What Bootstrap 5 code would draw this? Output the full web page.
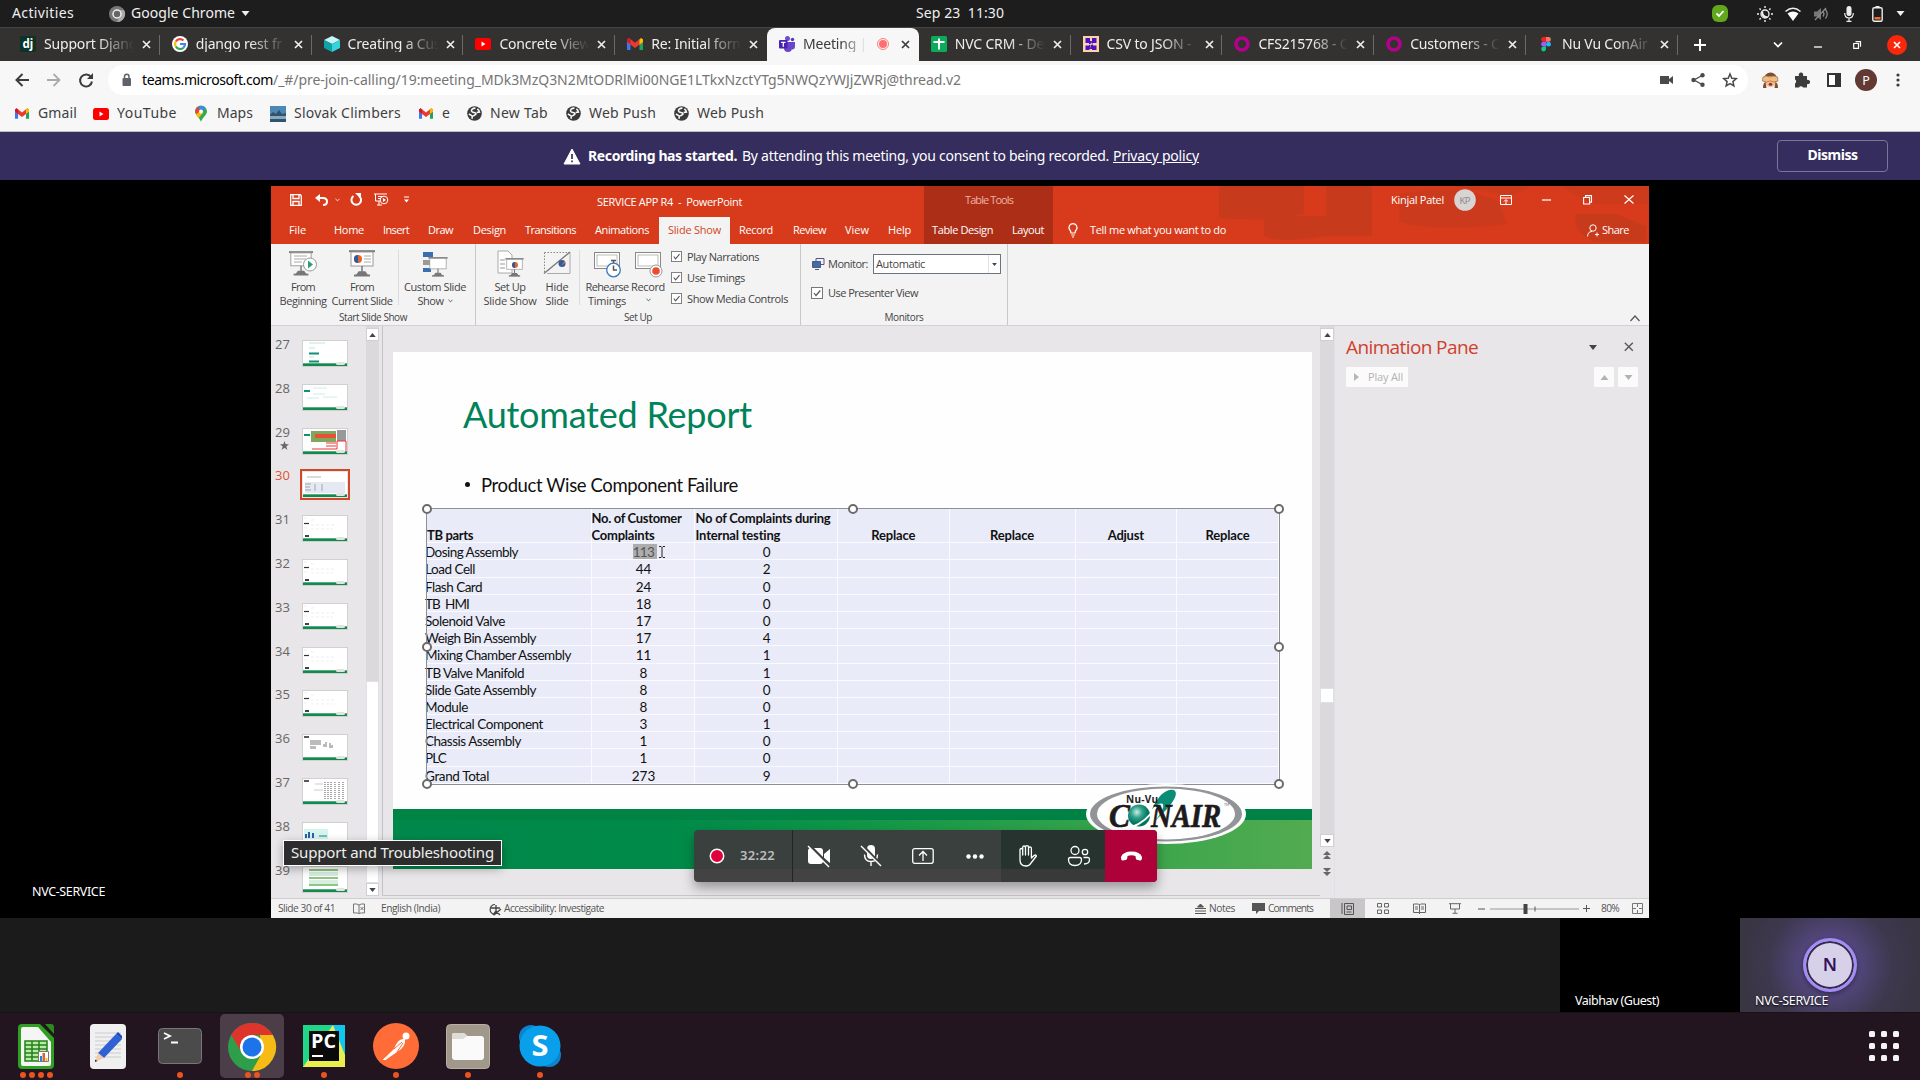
<!DOCTYPE html>
<html lang="en">
<head>
<meta charset="utf-8">
<title>Meeting | Microsoft Teams</title>
<link href="https://cdn.jsdelivr.net/npm/bootstrap@5.3.0/dist/css/bootstrap.min.css" rel="stylesheet">
<style>
body{width:1920px;height:1080px;overflow:hidden;background:#000;font-family:"Noto Sans","Open Sans",sans-serif;font-size:14px;line-height:1.2}
svg{flex:none;display:block;overflow:visible}
.bar{display:flex;align-items:center;flex:none}
.bar>*,.fixed{flex:none}
[data-w]{display:inline-block;white-space:pre;flex:none}
.end{margin-left:auto}
/* desktop top bar */
.sysbar{height:27px;background:#1d1d1d;color:#f0f0f0;position:relative}
.sysclock{width:100%;text-align:center;left:0}
.tabstrip{height:34px;background:#333230;padding-left:8px;border-top:1px solid #454442;color:#eee}
.ctab{width:151.8px;height:33px;display:flex;align-items:center;padding:0 0 1px 12px;position:relative}
.ctab .ttl{width:90px;margin-left:8px;overflow:hidden;white-space:nowrap;-webkit-mask-image:linear-gradient(90deg,#000 60%,transparent 100%);letter-spacing:-.18px}
.ctab .cls{width:9px;margin-left:8px}
.ctab.line::after{content:"";position:absolute;right:0;top:7px;width:1px;height:20px;background:#6b6a68}
.ctab.on{background:#f7f7f7;color:#3c3c3c;border-radius:8px 8px 0 0}
.ctab.on .ttl{width:64px}
.toolbar1{height:37px;background:#f7f7f7;color:#333;padding-left:13px}
.omni{width:1640px;height:30px;border-radius:15px;background:#fff;margin-left:13px;padding-left:12px}
.omni span{padding-top:1px}
.omni .dim{color:#757575}
.marks{height:34px;background:#f7f7f7;border-bottom:1px solid #bcbcbc;color:#3f3f3f;padding:0 0 2px 13px}
.consent{height:48px;background:#342d5e;color:#fff;padding-left:564px}
.consent .dismiss{width:111px;height:32px;border:1px solid #7b7699;border-radius:4px;color:#fff;font-weight:700;font-size:14px;line-height:28px;padding:0 0 2px;margin-left:578px;background:transparent}
.stage{height:738px;background:#000;padding:6px 0 0 271px;position:relative}
.stagename{left:32px;top:704px;color:#fff;font-size:12.5px}
/* presentation window */
.ppt{width:1378px;height:732px;background:#e8e6e9;font-family:"Open Sans","Noto Sans",sans-serif;font-size:11px;color:#444;position:relative}
.redhead{height:58px;background:#d83b1b;color:#fff;position:relative}
.redhead .deco{left:0;top:0}
.redhead .bar{position:relative}
.tools{left:653px;top:0;width:129px;height:58px;background:#ac2e16}
.t1{height:31px;padding-bottom:4px}
.t2{height:27px;padding-bottom:1px}
.actv{width:71px;height:27px;background:#f4f3f4;color:#d24726;display:flex;align-items:center;justify-content:center}
.ribbon{height:82px;background:#f4f3f4;border-bottom:1px solid #d3d1d3;position:relative}
.grp{height:100%;display:flex;flex-direction:column;border-right:1px solid #c9c9c9;background-clip:content-box}
.grp .inner{height:67px;display:flex}
.grp .cap{text-align:center;font-size:10px;line-height:15px;color:#444}
.tool{display:flex;flex-direction:column;align-items:center;padding-top:6px;line-height:14px}
.tool svg{margin-bottom:2px}
.vsep{width:1px;height:55px;background:#dcdcdc;margin-top:6px}
.chk{display:flex;align-items:center;height:21px}
.work{height:573px;display:flex;border-bottom:1px solid #cfcdcf}
.thumbs{width:95px;height:570px;overflow:hidden;padding-top:15px}
.th{height:43.8px;display:flex}
.th .no{width:32px;padding-left:4px;font-size:13px;line-height:13px;color:#666;margin-top:-3px}
.th .pic{width:44px;height:25px;background:#fff;outline:1px solid #d0d0d0;position:relative}
.th .pic.sel{outline:2.5px solid #d24726;outline-offset:1.2px}
.sb{width:13px;display:flex;flex-direction:column;background:#dbd9dc}
.sb .btnx{height:13px;background:#fff;border:1px solid #d0d0d0;display:flex;align-items:center;justify-content:center}
.canvas{width:938px;height:570px;border-left:1px solid #c4c2c4;margin-left:3px;padding:26px 0 0 10px;border-bottom:1px solid #c8c6c8}
.slide{width:919px;height:517px;background:#fefefe;position:relative;font-family:Lato,"Open Sans",sans-serif;color:#111;display:flex;flex-direction:column}
.slide h1{font-size:36px;line-height:42px;color:#00835a;margin:41px 0 0 70px;font-weight:400}
.bul{font-size:18.5px;line-height:24px;margin:38px 0 0 70px;display:flex}
.dotc{width:5px;height:5px;border-radius:50%;background:#111;margin:9px 11px 0 2px}
.gridt{margin:12px 0 0 34px;width:852px;height:275px;display:grid;grid-template-columns:164.5px 103px 143.5px 111.5px 126px 101.5px 102px;grid-template-rows:34.2px repeat(14,17.2px);background:#e9ecf8;outline:1.3px solid #8d8f96;position:relative;font-size:13.5px;line-height:17px;flex:none}
.gridt .cel{border-right:1px solid #fafbff;border-bottom:1px solid #fafbff;text-align:center;white-space:nowrap;padding-top:1px;height:100%;min-height:0}
.gridt .cel:not(.nm):not(.hd){padding-left:2px}
.gridt .nm{text-align:left;text-indent:-1px}
.gridt .hd{font-weight:700;font-size:13px;line-height:16.5px;display:flex;align-items:flex-end;justify-content:center;padding-bottom:0}
.gridt .hl{justify-content:flex-start;text-align:left}
.gridt .hd>span{position:relative;top:1px}
.gridt .pk{background:#ecedf8}
.sel113{background:#adadb0;color:#555;display:inline-block;height:15px;line-height:16px;padding-right:3px;margin-left:3px;letter-spacing:-.6px;vertical-align:top}
.hdl{position:absolute;width:10px;height:10px;border:2px solid #6b6b6b;border-radius:50%;background:#fff;transform:translate(-50%,-50%)}
.foot{margin-top:auto;height:60px;background:linear-gradient(90deg,#00884a 0,#008a49 30%,#129748 52%,#3aa54c 80%,#52ab50 100%)}
.foot::before{content:"";display:block;height:11px;background:linear-gradient(90deg,#008443,#008145)}
.pane{flex:1;padding:10px 11px 0 11px}
.pane h2{font-size:19px;line-height:22px;color:#d0402c;margin:0;font-weight:400}
.wbtn{background:#fbfbfb;height:20px;display:flex;align-items:center;color:#b3b1b3}
.status{height:19px;background:#f4f3f4;font-size:10.2px;color:#555;padding-left:7px}
.callbar{left:694px;top:650px;width:463px;height:52px;border-radius:4px;overflow:hidden;background:linear-gradient(#3a403e 0 39px,#434343 39px);box-shadow:0 6px 12px rgba(0,0,0,.35);display:flex;align-items:center;z-index:5}
.cb{width:52px;height:52px;display:flex;align-items:center;justify-content:center}
.cb.dk{background:linear-gradient(#27332e 0 39px,#383a39 39px)}
.tip{left:283px;top:660px;width:219px;height:26px;border:1px solid #fff;background:#2d2d2d;color:#eee;font-size:15px;display:flex;align-items:center;padding:0 0 2px 7px;z-index:6;box-shadow:0 3px 10px rgba(0,0,0,.3)}
.strip{height:94px;background:#1b1b1b;display:flex;justify-content:flex-end;color:#fff;font-size:12.5px}
.tile{width:180px;height:94px;padding-left:15px;display:flex;flex-direction:column;justify-content:flex-end;padding-bottom:0;text-shadow:0 1px 2px #000}
.tile.me{background:radial-gradient(circle at 50% 50%,#5e4f8a 0,#51467a 30px,#3e384e 62px,#393543 90px);position:relative}
.ava{left:63px;top:20px;width:54px;height:54px;border:3px solid #a48cf8;border-radius:50%;background:#d6d0e8;box-shadow:inset 0 0 0 2px #322a4a,0 2px 5px rgba(0,0,0,.4);color:#33135c;font-size:18px;font-weight:600;text-shadow:none;display:flex;align-items:center;justify-content:center}
.dock{height:68px;background:#221520;border-top:1px solid #141414;display:flex;position:relative}
.app{width:72px;height:67px;display:flex;flex-direction:column;align-items:center;justify-content:flex-end;position:relative}
.app.cur::before{content:"";position:absolute;left:4px;top:1px;width:64px;height:64px;border-radius:5px;background:#4b3e49}
.app svg{position:relative}
.dots{height:6px;display:flex;gap:3px;position:relative;margin:1px 0 2px}
.dots i{width:6px;height:6px;border-radius:50%;background:#e95420}
.nine{display:grid;grid-template-columns:repeat(3,6px);gap:6px;margin:18px 21px 0 auto;height:30px}
.nine i{width:6px;height:6px;background:#f4f4f4;border-radius:1.5px}
</style>
<script src="https://cdn.jsdelivr.net/npm/bootstrap@5.3.0/dist/js/bootstrap.bundle.min.js"></script>
</head>
<body>
<svg width="0" height="0" class="position-absolute">
<defs>
<symbol id="x" viewBox="0 0 9 9"><path d="M1 1l7 7M8 1l-7 7" stroke="currentColor" stroke-width="1.7" fill="none"/></symbol>
<symbol id="gm" viewBox="0 0 16 12"><path d="M0 12V1.500h3.500V12z" fill="#3b78f0"/><path d="M12.500 1.500H16V12h-3.500z" fill="#20a558"/><path d="M0 1.500 2 0l6 4.800L14 0l2 1.500V4L8 10 0 4z" fill="#ea3a30"/><path d="M12.500 1.500 14.200 0 16 1.600V4l-3.500 2.700z" fill="#fbbc05"/><path d="M0 3.500v-2L1.800 0 3.500 1.300v5z" fill="#d01a2b"/></symbol>
<symbol id="yt" viewBox="0 0 16 12"><rect width="16" height="12" rx="2.5" fill="#f00"/><path d="M6.500 3.500v5l4-2.500z" fill="#fff"/></symbol>
<symbol id="globe" viewBox="0 0 16 16"><circle cx="8" cy="8" r="7.800" fill="#3a3a3d"/><path d="M9 2.300c-3 0-5 1.500-4 3.500 1 1.700 4 .4 4.500 2.200.5 1.900-2.500 1.200-2.800 3.200M11 3c1.500 1 2 2 2.300 3.500l-3 .5M2 8.500l3.500 2v3" fill="none" stroke="#f7f7f7" stroke-width="1.700"/></symbol>
<symbol id="ring" viewBox="0 0 16 16"><circle cx="8" cy="8" r="6" fill="none" stroke="#b5008c" stroke-width="3.600"/></symbol>
<symbol id="ck" viewBox="0 0 12 12"><rect x=".5" y=".5" width="11" height="11" fill="#fff" stroke="#777"/><path d="M3 6l2 2.500L9.300 3.500" fill="none" stroke="#555" stroke-width="1.200"/></symbol>
<symbol id="up" viewBox="0 0 8 5"><path d="M0 5l4-5 4 5z" fill="currentColor"/></symbol>
<symbol id="dn" viewBox="0 0 8 5"><path d="M0 0l4 5 4-5z" fill="currentColor"/></symbol>
<symbol id="cv" viewBox="0 0 6 4"><path d="M.5.5L3 3 5.500.5" fill="none" stroke="currentColor"/></symbol>
<symbol id="board" viewBox="0 0 26 27"><path d="M0 1.200h26" stroke="#777" stroke-width="2"/><rect x="2" y="2" width="22" height="14" fill="#fff" stroke="#999"/><path d="M13 16v6M8 25l2-3h6l2 3z" stroke="#777" stroke-width="1.500" fill="#777"/><path d="M5 25.500h16" stroke="#777" stroke-width="2"/></symbol>
</defs>
</svg>

<div class="sysbar bar">
  <span data-gap="12" data-w="62">Activities</span>
  <svg data-gap="35" width="16" height="16" viewBox="0 0 16 16"><circle cx="8" cy="8" r="8" fill="#777"/><path d="M8 4h7A8 8 0 0 1 8 16l3-6z" fill="#aaa"/><circle cx="8" cy="8" r="4" fill="#666" stroke="#eee" stroke-width="1.500"/></svg>
  <span data-gap="6" data-w="104">Google Chrome</span>
  <svg data-gap="6" width="9" height="5"><use href="#dn"/></svg>
  <div class="sysclock position-absolute"><span data-w="88">Sep 23  11:30</span></div>
  <svg class="end" width="16" height="17" viewBox="0 0 16 17"><rect width="16" height="17" rx="6" fill="#62a81c"/><path d="M4.500 8.500l2.500 2.500 4.500-5" fill="none" stroke="#fff" stroke-width="1.800"/></svg>
  <svg data-gap="29" width="16" height="16" viewBox="0 0 16 16"><circle cx="8" cy="8" r="4" fill="none" stroke="#eee" stroke-width="1.300"/><path d="M5.500 5.500a4 4 0 0 0 5 5.500c-3 0-5-2-5-5.500zM8 0v2M8 14v2M0 8h2M14 8h2M2.500 2.500l1.300 1.300M12.200 12.200l1.300 1.300M2.500 13.500l1.300-1.300M12.200 3.800l1.300-1.300" stroke="#eee" stroke-width="1.400" fill="#eee"/></svg>
  <svg data-gap="12" width="16" height="14" viewBox="0 0 16 14"><path d="M8 14L2.500 6.500q5.500-4 11 0z" fill="#fff"/><path d="M.5 4.500q7.500-6.500 15 0" fill="none" stroke="#eee" stroke-width="1.600"/></svg>
  <svg data-gap="13" width="15" height="14" viewBox="0 0 15 14"><path d="M0 4.500h3L7 1v12L3 9.500H0z" fill="#777"/><path d="M9 4.500q2 2.500 0 5M11.500 2.500q3.500 4.500 0 9M1 13L12 1" fill="none" stroke="#888" stroke-width="1.300"/></svg>
  <svg data-gap="15" width="10" height="16" viewBox="0 0 10 16"><rect x="2.500" width="5" height="10" rx="2.500" fill="#eee"/><path d="M.7 7q0 5 4.300 5t4.300-5M5 12v3M2.500 15.300h5" fill="none" stroke="#eee" stroke-width="1.200"/></svg>
  <svg data-gap="18" width="11" height="16" viewBox="0 0 11 16"><path d="M3.500 0h4v1.500h-4z" fill="#eee"/><rect x=".8" y="1.800" width="9.400" height="13.400" rx="1.500" fill="none" stroke="#eee" stroke-width="1.400"/><path d="M2.500 11h6v2.500h-6z" fill="#f26c2c"/></svg>
  <svg data-gap="13" data-right="15" width="9" height="5"><use href="#dn"/></svg>
</div>

<div class="tabstrip bar">
  <div class="ctab line"><svg width="16" height="16"><rect width="16" height="16" fill="#0b3426"/><text x="2.500" y="12" font-size="11.500" font-weight="700" fill="#fff">dj</text></svg><span class="ttl">Support Djang</span><svg class="cls" height="9"><use href="#x"/></svg></div>
  <div class="ctab line"><svg width="16" height="16" viewBox="0 0 16 16"><circle cx="8" cy="8" r="8" fill="#fff"/><g fill="none" stroke-width="2.200"><path d="M3.800 5.500A5 5 0 0 1 11.500 4.500" stroke="#ea4335"/><path d="M3.700 5.500a5 5 0 0 0 0 5" stroke="#fbbc05"/><path d="M3.800 10.500a5 5 0 0 0 7.700 1.200" stroke="#34a853"/><path d="M8 8h5a5 5 0 0 1-1.600 3.700" stroke="#4285f4"/></g></svg><span class="ttl">django rest fr</span><svg class="cls" height="9"><use href="#x"/></svg></div>
  <div class="ctab line"><svg width="16" height="16" viewBox="0 0 16 16"><path d="M8 0l8 4-8 4-8-4z" fill="#c6f5f5"/><path d="M0 4l8 4v8l-8-4z" fill="#0fa3a8"/><path d="M16 4L8 8v8l8-4z" fill="#35d4dc"/></svg><span class="ttl">Creating a Cus</span><svg class="cls" height="9"><use href="#x"/></svg></div>
  <div class="ctab line"><svg width="16" height="12"><use href="#yt"/></svg><span class="ttl">Concrete View</span><svg class="cls" height="9"><use href="#x"/></svg></div>
  <div class="ctab"><svg width="16" height="12"><use href="#gm"/></svg><span class="ttl">Re: Initial form</span><svg class="cls" height="9"><use href="#x"/></svg></div>
  <div class="ctab on"><svg width="16" height="16" viewBox="0 0 16 16"><circle cx="8.500" cy="2.500" r="2.500" fill="#6b4fd0"/><circle cx="13.500" cy="3.500" r="1.700" fill="#4c3ab8"/><path d="M5 6h8v6a4 4 0 0 1-8 0zM12 6h4v4.500a3 3 0 0 1-3 3z" fill="#6a45cc"/><rect y="4" width="8.500" height="8.500" rx="1" fill="#4b22b4"/><path d="M2 6.300h4.500M4.300 6.300v4.500" stroke="#fff" stroke-width="1.300"/></svg><span class="ttl">Meeting | M</span><svg data-gap="10" width="12" height="12"><circle cx="6" cy="6" r="5.500" fill="none" stroke="#ff7c80"/><circle cx="6" cy="6" r="4" fill="#ff6e73"/></svg><svg data-gap="12" width="9" height="9"><use href="#x"/></svg></div>
  <div class="ctab line"><svg width="16" height="16"><rect width="16" height="16" rx="1.500" fill="#0caa5b"/><path d="M8 2.500v11M2.500 6h11" stroke="#fff" stroke-width="2"/></svg><span class="ttl">NVC CRM - Det</span><svg class="cls" height="9"><use href="#x"/></svg></div>
  <div class="ctab line"><svg width="16" height="16"><rect width="16" height="16" fill="#ffd3a5"/><path d="M2.500 2h4.500v5H2.500zM9 2h4.500v5H9zM2.500 9.500h4v4.500h-4zM9 9.500h4.500v4.500H9zM6 5h4v8H6z" fill="#4a12c8"/><path d="M9 4.500L8.500 7.500h4L8 9l-1 4 .3-4H4.500L8 7.500z" fill="#ffd3a5"/></svg><span class="ttl">CSV to JSON -</span><svg class="cls" height="9"><use href="#x"/></svg></div>
  <div class="ctab line"><svg width="16" height="16"><use href="#ring"/></svg><span class="ttl">CFS215768 - C</span><svg class="cls" height="9"><use href="#x"/></svg></div>
  <div class="ctab line"><svg width="16" height="16"><use href="#ring"/></svg><span class="ttl">Customers - C</span><svg class="cls" height="9"><use href="#x"/></svg></div>
  <div class="ctab line"><svg width="16" height="16" viewBox="0 0 16 16"><path d="M8 1H5.500a2.400 2.400 0 0 0 0 4.800H8z" fill="#f5201a"/><path d="M8 1h2.500a2.400 2.400 0 0 1 0 4.800H8z" fill="#ff7262"/><path d="M8 5.800H5.500a2.400 2.400 0 0 0 0 4.800H8z" fill="#a259ff"/><circle cx="10.500" cy="8.200" r="2.400" fill="#1abcfe"/><path d="M8 10.600H5.500A2.400 2.400 0 1 0 8 13z" fill="#0acf83"/></svg><span class="ttl">Nu Vu ConAir</span><svg class="cls" height="9"><use href="#x"/></svg></div>
  <svg data-gap="16" width="12" height="12"><path d="M6 0v12M0 6h12" stroke="#fff" stroke-width="2"/></svg>
  <svg data-gap="67" width="10" height="6"><path d="M1 .5l4 4 4-4" fill="none" stroke="#fff" stroke-width="1.700"/></svg>
  <svg data-gap="31" width="8" height="8"><path d="M0 6h8" stroke="#fff" stroke-width="1.300"/></svg>
  <svg data-gap="31" width="8" height="8"><path d="M.7 2.500h4.800v4.800H.7zM2.500.7h5v5" fill="none" stroke="#fff" stroke-width="1.200"/></svg>
  <svg data-gap="26" width="20" height="20"><circle cx="10" cy="10" r="10" fill="#f9280c"/><path d="M7 7l6 6M13 7l-6 6" stroke="#fff" stroke-width="1.600"/></svg>
</div>

<div class="toolbar1 bar">
  <svg data-gap="2" width="14" height="14"><path d="M14 7H2M7.500 1L1.500 7l6 6" fill="none" stroke="#3c3c3c" stroke-width="2"/></svg>
  <svg data-gap="18" width="14" height="14"><path d="M0 7h12M6.500 1l6 6-6 6" fill="none" stroke="#aaa" stroke-width="1.800"/></svg>
  <svg data-gap="18" width="14" height="14"><path d="M12 4a6 6 0 1 0 1 4.500" fill="none" stroke="#3c3c3c" stroke-width="2"/><path d="M14 0v6H8z" fill="#3c3c3c"/></svg>
  <div class="omni bar" data-gap="15">
    <svg width="12" height="14" data-gap="1"><rect x="1.500" y="5" width="8.500" height="8" rx="1" fill="#5f6368"/><path d="M3.500 5V3.500a2.200 2.200 0 0 1 4.500 0V5" fill="none" stroke="#5f6368" stroke-width="1.500"/></svg>
    <span data-gap="9" data-w="131" class="text-black">teams.microsoft.com</span><span class="dim" data-w="688">/_#/pre-join-calling/19:meeting_MDk3MzQ3N2MtODRlMi00NGE1LTkxNzctYTg5NWQzYWJjZWRj@thread.v2</span>
    <svg data-gap="699" width="13" height="10"><path d="M0 1h9v8H0zM9 4l4-3v8L9 6z" fill="#4a4a4a"/></svg>
    <svg data-gap="18" width="14" height="14"><path d="M12 2L3 7l9 5" fill="none" stroke="#4a4a4a" stroke-width="1.300"/><g fill="#4a4a4a"><circle cx="11.500" cy="2.300" r="2.200"/><circle cx="2.500" cy="7" r="2.200"/><circle cx="11.500" cy="11.700" r="2.200"/></g></svg>
    <svg data-gap="18" width="14" height="14"><path d="M7 1l1.800 4.200 4.500.4-3.400 3 1 4.400L7 10.700 3.100 13l1-4.400-3.400-3 4.500-.4z" fill="none" stroke="#4a4a4a" stroke-width="1.500"/></svg>
  </div>
  <svg data-gap="14" width="17" height="16" viewBox="0 0 17 16"><circle cx="8.500" cy="7" r="6.500" fill="#7c4d35"/><ellipse cx="8.500" cy="9.500" rx="5.500" ry="5.500" fill="#f2c08c"/><path d="M1 5q3-2 7 0 4-2 7.500 0l.5 4q-4 2-7.500 0-4 2-8 0z" fill="#efbd84" stroke="#a4693f" stroke-width=".7"/><ellipse cx="8.500" cy="12.300" rx="1.800" ry="1.500" fill="#a22b35"/><path d="M1 16q0-5 2.500-6l1 6zM16 16q0-5-2.500-6l-1 6z" fill="#7c4d35"/></svg>
  <svg data-gap="15" width="16" height="16" viewBox="0 0 16 16"><path d="M1 4h4a2.300 2.300 0 1 1 4 0h4v4a2.200 2.200 0 1 1 0 4v3.500H9a2.200 2.200 0 0 0-4 0H1v-4a2.300 2.300 0 0 0 0-4z" fill="#3c3c3c"/></svg>
  <svg data-gap="17" width="14" height="14"><rect x="1" y="1" width="12" height="12" fill="#fff" stroke="#333" stroke-width="2"/><path d="M8 1h6v12H8z" fill="#333"/></svg>
  <svg data-gap="14" width="22" height="22"><circle cx="11" cy="11" r="11" fill="#623a33"/><text x="7.300" y="15.500" font-size="12.500" fill="#fff">P</text></svg>
  <svg data-gap="19" width="4" height="14"><g fill="#3c3c3c"><circle cx="2" cy="2" r="1.600"/><circle cx="2" cy="7" r="1.600"/><circle cx="2" cy="12" r="1.600"/></g></svg>
</div>

<div class="marks bar">
  <svg data-gap="2" width="14" height="11"><use href="#gm"/></svg><span data-gap="9" data-w="39">Gmail</span>
  <svg data-gap="16" width="16" height="12"><use href="#yt"/></svg><span data-gap="8" data-w="60">YouTube</span>
  <svg data-gap="18" width="12" height="16" viewBox="0 0 12 16"><path d="M6 16C5 12 0 9 0 5.500a6 6 0 0 1 12 0C12 9 7 12 6 16z" fill="#34a853"/><path d="M1 8Q-1 3 3 .8L8 4 3 10z" fill="#ea4335"/><path d="M3 .8Q7-1.200 10.500 2L6 6z" fill="#4285f4"/><path d="M1 8.200L5.500 5 8 7l-4.500 5z" fill="#fbbc05"/><circle cx="6" cy="5.500" r="2" fill="#fff"/></svg><span data-gap="10" data-w="36">Maps</span>
  <svg data-gap="17" width="16" height="16"><rect width="16" height="16" fill="#4d88b5"/><path d="M0 9l3-3 3 2 3-4 3 4 4-1v3H0z" fill="#33536c"/><path d="M0 10h16v3H0z" fill="#88aabf"/><path d="M0 13h16v3H0z" fill="#31546d"/></svg><span data-gap="8" data-w="107">Slovak Climbers</span>
  <svg data-gap="18" width="14" height="11"><use href="#gm"/></svg><span data-gap="9" data-w="8">e</span>
  <svg data-gap="17" width="15" height="15"><use href="#globe"/></svg><span data-gap="8" data-w="58">New Tab</span>
  <svg data-gap="18" width="15" height="15"><use href="#globe"/></svg><span data-gap="8" data-w="67">Web Push</span>
  <svg data-gap="18" width="15" height="15"><use href="#globe"/></svg><span data-gap="8" data-w="67">Web Push</span>
</div>

<div class="consent bar">
  <svg width="16" height="15"><path d="M8 0L16 15H0z" fill="#fff" stroke="#fff" stroke-linejoin="round"/><path d="M8 5v5M8 11.500v1.800" stroke="#342d5e" stroke-width="1.700"/></svg>
  <b data-gap="8" data-w="149">Recording has started.</b><span data-gap="5" data-w="367">By attending this meeting, you consent to being recorded.</span><u data-gap="4" data-w="86">Privacy policy</u>
  <button class="btn dismiss"><span data-w="50">Dismiss</span></button>
</div>

<main class="stage">
  <div class="ppt">
    <header class="redhead">
      <svg class="deco position-absolute" width="1378" height="58"><g fill="#b4391f" opacity=".45"><path d="M948 0h85v28q-40 8-85 4zM1055 0h46v50h-46q-45 8-62 0V30h62z"/><path d="M1128 8q60-12 100 8l8 22q-70 8-108-2z" opacity=".8"/><path d="M1305 28h40l30 12v16h-50q-24-8-20-28z"/><path d="M1180 0h80l-20 10zM1290 0h88v18h-60z" opacity=".6"/></g></svg>
      <div class="tools position-absolute"></div>
      <div class="t1 bar">
        <svg data-gap="19" width="12" height="12"><path d="M.7.7h9.600L11.300 2v9.300H.7zM3 1v3.500h6V1M3 11V7.500h6V11" fill="none" stroke="#fff" stroke-width="1.300"/></svg>
        <svg data-gap="13" width="13" height="12"><path d="M2 4h6q4 0 4 3.500T8 11" fill="none" stroke="#fff" stroke-width="2"/><path d="M0 4l5-4v8z" fill="#fff"/></svg>
        <svg data-gap="7" width="5" height="4"><use href="#cv"/></svg>
        <svg data-gap="10" width="12" height="13"><path d="M3.500 3A4.800 4.800 0 1 0 9 3" fill="none" stroke="#fff" stroke-width="2"/><path d="M5 0h6v6z" fill="#fff"/></svg>
        <svg data-gap="12" width="14" height="13"><path d="M0 1h13M1.500 1v7h5M4 3.500h5M4 5.500h3M5 8v4M3 12h5" fill="none" stroke="#fff"/><circle cx="10" cy="7" r="3.800" fill="none" stroke="#fff"/><path d="M9 5v4l3-2z" fill="#fff"/></svg>
        <svg data-gap="16" width="5" height="7"><path d="M0 1h5" stroke="#fff"/><path d="M0 3.500h5L2.500 6.500z" fill="#fff"/></svg>
        <span data-gap="188" data-w="145" class="pt-1">SERVICE APP R4  -  PowerPoint</span>
        <span data-gap="223" data-w="48" style="color:#ecb3a6">Table Tools</span>
        <span data-gap="378" data-w="53">Kinjal Patel</span>
        <svg data-gap="10" width="22" height="22"><circle cx="11" cy="11" r="10.800" fill="#d8d4d4"/><text x="5.500" y="14.500" font-size="9.500" textLength="11" fill="#8a8484">KP</text></svg>
        <svg data-gap="24" width="12" height="10"><path d="M.5.5h11v9H.5zM.5 3h11M6 9V5M4 6.500L6 4.500l2 2" fill="none" stroke="#fff"/></svg>
        <svg data-gap="30" width="9" height="2"><path d="M0 1h9" stroke="#fff" stroke-width="1.300"/></svg>
        <svg data-gap="32" width="9" height="10"><path d="M.6 2.500h6v6.500h-6zM2.500 2.500V.6h6v6.500H6.800" fill="none" stroke="#fff" stroke-width="1.100"/></svg>
        <svg data-gap="32" width="10" height="9"><path d="M.5.5l9 8M9.500.5l-9 8" stroke="#fff" stroke-width="1.200"/></svg>
      </div>
      <nav class="t2 bar">
        <span data-gap="18" data-w="17">File</span><span data-gap="28" data-w="30">Home</span><span data-gap="19" data-w="26">Insert</span><span data-gap="19" data-w="25">Draw</span><span data-gap="20" data-w="33">Design</span><span data-gap="19" data-w="51">Transitions</span><span data-gap="19" data-w="54">Animations</span>
        <div class="actv" data-gap="10"><span data-w="53">Slide Show</span></div>
        <span data-gap="9" data-w="34">Record</span><span data-gap="20" data-w="33">Review</span><span data-gap="19" data-w="24">View</span><span data-gap="19" data-w="23">Help</span><span data-gap="21" data-w="61">Table Design</span><span data-gap="19" data-w="32">Layout</span>
        <svg data-gap="24" width="10" height="15"><path d="M3 10q0-2-1.500-3.500A4 4 0 1 1 8.500 6.500Q7 8 7 10zM3.300 12h3.500M4 14h2" fill="none" stroke="#fff" stroke-width="1.200"/></svg>
        <span data-gap="12" data-w="136">Tell me what you want to do</span>
        <svg data-gap="361" width="12" height="13"><circle cx="6" cy="4" r="3.200" fill="none" stroke="#fff"/><path d="M.6 12.500q0-5 4.500-5M8 10.500h4M10 8.500v4" fill="none" stroke="#fff"/></svg>
        <span data-gap="3" data-w="27">Share</span>
      </nav>
    </header>

    <section class="ribbon d-flex">
      <div class="grp" data-box="205">
        <div class="inner">
          <div class="tool" data-gap="8" data-box="48"><svg width="28" height="28"><use href="#board" width="24" height="27"/><path d="M5 6h13M5 9h12M5 12h8" stroke="#aaa"/><circle cx="21" cy="14.500" r="6.500" fill="#fff" stroke="#999"/><path d="M19 10.500v8l5-4z" fill="#2c9c7a"/></svg><span data-w="24">From</span><span data-w="47">Beginning</span></div>
          <div class="tool" data-gap="4" data-box="62"><svg width="26" height="28"><use href="#board" width="26" height="27"/><circle cx="9" cy="9" r="4" fill="#e8632b"/><path d="M9 5a4 4 0 0 0 0 8z" fill="#2a5c9f"/><path d="M15 6h7M15 9h7M15 12h7" stroke="#aaa"/></svg><span data-w="24">From</span><span data-w="61">Current Slide</span></div>
          <div class="vsep" data-gap="5"></div>
          <div class="tool" data-gap="4" data-box="64"><svg width="25" height="28"><path d="M0 2h10v5H0zM0 18h8v4H0z" fill="#3b6eac"/><path d="M0 10h7v5H0z" fill="#999"/><svg x="5" y="7" width="20" height="20"><use href="#board"/></svg></svg><span data-w="62">Custom Slide</span><span class="d-flex align-items-center"><span data-w="26">Show</span><svg class="m-0 ms-1" width="5" height="4"><use href="#cv"/></svg></span></div>
        </div>
        <div class="cap"><span data-w="68">Start Slide Show</span></div>
      </div>
      <div class="grp" data-box="325">
        <div class="inner">
          <div class="tool" data-gap="6" data-box="56"><svg width="27" height="28"><path d="M1 1h10l4 4v18H1z" fill="#fff" stroke="#aaa"/><path d="M3 10h5M3 14h5M3 18h5" stroke="#999"/><svg x="8" y="8" width="19" height="19"><use href="#board"/><circle cx="10" cy="7" r="3" fill="#e8632b"/><path d="M10 4a3 3 0 0 0 0 6z" fill="#2a5c9f"/></svg></svg><span data-w="31">Set Up</span><span data-w="53">Slide Show</span></div>
          <div class="tool" data-gap="3" data-box="32"><svg width="27" height="28"><path d="M.5 2.500h25M.5 2.500v20" fill="none" stroke="#888" stroke-dasharray="1.500 1.500"/><path d="M26 2.500v21H3" fill="none" stroke="#aaa"/><path d="M0 23.500L26 2" stroke="#777" stroke-width="1.300"/><circle cx="18" cy="13.500" r="3.500" fill="#2a5c9f"/><path d="M17 16l4-6v3z" fill="#e8632b"/></svg><span data-w="23">Hide</span><span data-w="23">Slide</span></div>
          <div class="vsep" data-gap="6"></div>
          <div class="tool" data-gap="5" data-box="44"><svg width="27" height="28"><rect x=".5" y="2.500" width="25" height="16" fill="#fff" stroke="#888"/><rect x="3" y="5" width="20" height="11" fill="none" stroke="#bbb"/><circle cx="19.500" cy="20" r="6.800" fill="#fff" stroke="#3b78bd" stroke-width="1.300"/><path d="M19.500 15.500V20H23M17 10.500h5M19.500 10v3" stroke="#555" fill="none" stroke-width="1.500"/></svg><span data-w="43">Rehearse</span><span data-w="38">Timings</span></div>
          <div class="tool" data-gap="1" data-box="36"><svg width="27" height="28"><rect x=".5" y="2.500" width="25" height="16" fill="#fff" stroke="#888"/><rect x="3" y="5" width="20" height="11" fill="none" stroke="#bbb"/><circle cx="21" cy="21" r="6" fill="#fff" stroke="#999"/><circle cx="21" cy="21" r="3.800" fill="#ee4b30"/></svg><span data-w="34">Record</span><svg data-top="4" width="5" height="4"><use href="#cv"/></svg></div>
          <div data-gap="5" data-top="2">
            <div class="chk"><svg width="11" height="11"><use href="#ck"/></svg><span data-gap="5" data-w="72">Play Narrations</span></div>
            <div class="chk"><svg width="11" height="11"><use href="#ck"/></svg><span data-gap="5" data-w="58">Use Timings</span></div>
            <div class="chk"><svg width="11" height="11"><use href="#ck"/></svg><span data-gap="5" data-w="101">Show Media Controls</span></div>
          </div>
        </div>
        <div class="cap"><span data-w="28">Set Up</span></div>
      </div>
      <div class="grp" data-box="207">
        <div class="inner flex-column">
          <div class="bar" data-top="10">
            <svg data-gap="11" width="13" height="12"><path d="M4 .5h8v6H4z" fill="#eef" stroke="#557"/><path d="M.5 3.500h8v6h-8z" fill="#3b6eac" stroke="#557"/><path d="M3 11.500h4" stroke="#557"/></svg>
            <span data-gap="3" data-w="40">Monitor:</span>
            <div class="bar bg-white border border-secondary" data-gap="5" data-box="128" data-h="20"><span data-gap="2" data-w="49">Automatic</span><span class="end border-start d-flex align-items-center justify-content-center h-100" data-box="12"><svg width="5" height="3"><use href="#dn"/></svg></span></div>
          </div>
          <div class="bar" data-top="12"><svg data-gap="10" width="12" height="12"><use href="#ck"/></svg><span data-gap="5" data-w="90">Use Presenter View</span></div>
        </div>
        <div class="cap"><span data-w="39">Monitors</span></div>
      </div>
      <svg class="end align-self-end" width="10" height="7" data-right="9" viewBox="0 3 10 7"><path d="M.5 6L5 1l4.500 5" fill="none" stroke="#555" stroke-width="1.200"/></svg>
    </section>

    <div class="work">
      <div class="thumbs" id="thumbs"></div>
      <div class="sb" data-h="570"><div class="btnx" data-top="2"><svg width="7" height="4"><use href="#up"/></svg></div><div class="bg-white border" data-top="340" data-h="202"></div><div class="btnx"><svg width="7" height="4"><use href="#dn"/></svg></div></div>
      <div class="canvas">
        <article class="slide">
          <h1><span data-w="289">Automated Report</span></h1>
          <div class="bul"><i class="dotc"></i><span data-w="257">Product Wise Component Failure</span></div>
          <div class="gridt" id="parts"></div>
          <div class="foot"></div>
          <svg class="position-absolute" width="160" height="58" style="left:693px;top:433px" viewBox="0 0 160 58">
            <defs><radialGradient id="ball" cx=".4" cy=".35"><stop offset="0" stop-color="#cdeee6"/><stop offset=".5" stop-color="#35a38d"/><stop offset="1" stop-color="#00765f"/></radialGradient></defs>
            <ellipse cx="80" cy="29" rx="80" ry="30" fill="#fff"/><ellipse cx="80" cy="29" rx="76" ry="27.500" fill="#929497"/><ellipse cx="80" cy="29" rx="69" ry="25.500" fill="#fff"/>
            <path d="M66 24Q76 3 88 5q6 4-7 19l-12 12q10-12 8-17-3-2-11 5z" fill="#0b8c75"/>
            <text x="40" y="18" font-family="Open Sans" font-weight="700" font-size="10" textLength="32" fill="#222">Nu-Vu</text>
            <g font-family="Liberation Serif" font-weight="700" font-style="italic" fill="#1c1a1b" stroke="#1c1a1b" stroke-width=".7" font-size="34"><text x="23" y="42" textLength="21" lengthAdjust="spacingAndGlyphs">C</text><text x="65" y="42" textLength="70" lengthAdjust="spacingAndGlyphs">NAIR</text></g>
            <circle cx="53" cy="30.500" r="11" fill="url(#ball)"/><path d="M46 42q14-5 24-20" fill="none" stroke="#fff" stroke-width="2"/>
            <text x="138" y="21" font-size="3.500" fill="#666">TM</text>
          </svg>
        </article>
      </div>
      <div class="sb" data-h="570" data-box="14"><div class="btnx" data-top="2"><svg width="7" height="4"><use href="#up"/></svg></div><div class="bg-white border" data-top="347" data-h="15"></div><div class="btnx" data-top="131"><svg width="7" height="4"><use href="#dn"/></svg></div><div class="d-flex flex-column align-items-center flex-grow-1" style="background:#e8e6e9"><svg data-top="4" width="8" height="8"><path d="M0 4l4-4 4 4zM0 8l4-4 4 4z" fill="#666"/></svg><svg data-top="9" width="8" height="8"><path d="M0 0h8L4 4zM0 4h8L4 8z" fill="#666"/></svg></div></div>
      <aside class="pane border-start">
        <div class="bar"><h2><span data-w="132">Animation Pane</span></h2><svg class="end" width="8" height="5"><use href="#dn"/></svg><svg data-gap="27" data-right="4" width="10" height="10"><path d="M.8.8l8 8M8.800.8l-8 8" stroke="#555" stroke-width="1.300"/></svg></div>
        <div class="bar" data-top="9"><div class="wbtn" data-box="62"><svg data-gap="8" width="6" height="8"><path d="M0 0l5 4-5 4z" fill="#b7b5b7"/></svg><span data-gap="8" data-w="35">Play All</span></div><div class="wbtn end justify-content-center" data-box="20"><svg width="9" height="5"><use href="#up"/></svg></div><div class="wbtn justify-content-center" data-gap="4" data-box="20"><svg width="9" height="5"><use href="#dn"/></svg></div></div>
      </aside>
    </div>

    <footer class="status bar">
      <span data-w="57">Slide 30 of 41</span>
      <svg data-gap="18" width="12" height="11"><path d="M6 2v8.500M6 2Q4 .5.500 1v9Q4 9.500 6 10.500M6 2Q8 .5 11.500 1v9Q8 9.500 6 10.500M7.500 4l3 3M10.500 4l-3 3" fill="none" stroke="#777"/></svg>
      <span data-gap="16" data-w="59">English (India)</span>
      <svg data-gap="48" width="14" height="12"><path d="M7 1.500A5 5 0 0 0 5 11" fill="none" stroke="#444" stroke-width="1.200"/><path d="M3 5h9M8 2v6l-3 4M8 8l4 4M6 12l7-6" fill="none" stroke="#444" stroke-width="1.300"/></svg>
      <span data-gap="2" data-w="100">Accessibility: Investigate</span>
      <svg data-gap="591" width="11" height="10"><path d="M5.500 0l3 3h-6zM0 4.500h11M0 7h11M0 9.500h11" fill="#555" stroke="#555"/></svg><span data-gap="3" data-w="26">Notes</span>
      <svg data-gap="17" width="14" height="11"><path d="M0 0h13v8H7l-3 3V8H0z" fill="#555"/></svg><span data-gap="2" data-w="45">Comments</span>
      <span class="h-100 d-flex align-items-center justify-content-center" style="background:#c8c6c8" data-gap="17" data-box="35"><svg width="13" height="12"><path d="M1 0v11M3.500.5h9v11h-9zM6 3h4.500v3.500H6zM5.500 9h5" fill="none" stroke="#555"/></svg></span>
      <svg data-gap="12" width="12" height="11"><path d="M.5.500h4v3.500h-4zM7.500.5h4v3.500h-4zM.5 7h4v3.500h-4zM7.500 7h4v3.500h-4z" fill="none" stroke="#666"/></svg>
      <svg data-gap="24" width="13" height="11"><path d="M6.500 1.500V11M.5 1h5l1 1 1-1h5v8.500H.5zM2 4h3M2 6h3M8 4h3M8 6h3" fill="none" stroke="#666"/></svg>
      <svg data-gap="23" width="12" height="11"><path d="M0 .7h12M1.500 1v5h9V1M6 6v4M3.500 10.300h5" fill="none" stroke="#666"/></svg>
      <svg data-gap="17" width="7" height="2"><path d="M0 1h7" stroke="#555"/></svg>
      <svg data-gap="5" width="89" height="10"><path d="M0 5h89" stroke="#999"/><path d="M45 2.500v5" stroke="#555"/><path d="M33.500 0h4v10h-4z" fill="#444"/></svg>
      <svg data-gap="4" width="7" height="7"><path d="M0 3.500h7M3.500 0v7" stroke="#555"/></svg>
      <span data-gap="11" data-w="18">80%</span>
      <svg data-gap="13" width="11" height="11"><path d="M.5.5h10v10H.5zM5.500 1v3M5.500 7v3M1 5.500h3M7 5.500h3" fill="none" stroke="#777"/></svg>
    </footer>
  </div>
  <div class="stagename position-absolute"><span data-w="73">NVC-SERVICE</span></div>
  <div class="tip position-absolute"><span data-w="203">Support and Troubleshooting</span></div>
  <div class="callbar position-absolute">
    <svg data-gap="15" width="16" height="16"><circle cx="8" cy="8" r="6.700" fill="#e0003c" stroke="#fff" stroke-width="1.500"/></svg>
    <span data-gap="15" data-w="35" class="fw-semibold" style="color:#bdbdbd;font-size:13px">32:22</span>
    <div data-gap="17" data-box="1" data-h="52" class="bg-dark"></div>
    <div class="cb"><svg width="24" height="22"><rect x="1" y="3" width="15" height="16" rx="3" fill="#fff"/><path d="M17 9l6-5v14l-6-5z" fill="#fff"/><path d="M2 0l21 21" stroke="#3a403e" stroke-width="3"/><path d="M1 1l21 21" stroke="#fff" stroke-width="1.400"/></svg></div>
    <div class="cb"><svg width="22" height="22"><rect x="7" y="0" width="8" height="14" rx="4" fill="#fff"/><path d="M4.500 9.500q0 7 6.500 7t6.500-7M11 16.500V21" fill="none" stroke="#fff" stroke-width="1.400"/><path d="M2 0l20 21" stroke="#3a403e" stroke-width="3"/><path d="M1 1l20 20" stroke="#fff" stroke-width="1.400"/></svg></div>
    <div class="cb"><svg width="22" height="16"><rect x=".7" y=".7" width="20.500" height="14.600" rx="2" fill="none" stroke="#fff" stroke-width="1.300"/><path d="M11 13V4M7 7.500l4-4 4 4" fill="none" stroke="#fff" stroke-width="1.300"/></svg></div>
    <div class="cb"><svg width="18" height="5"><g fill="#fff"><circle cx="2.500" cy="2.500" r="2.200"/><circle cx="9" cy="2.500" r="2.200"/><circle cx="15.500" cy="2.500" r="2.200"/></g></svg></div>
    <div class="cb dk"><svg width="20" height="22" viewBox="0 0 20 22"><path d="M3 12V5q0-1.500 1.300-1.500T5.700 5v5V2.500Q5.700 1 7 1t1.500 1.500V10 2Q8.500.7 10 .7T11.500 2v8V3.500Q11.500 2 13 2t1.400 1.500V13l3-2.700q1.600-.8 2 .7L14 18q-1.500 3-5 3-6 0-6-6z" fill="none" stroke="#fff" stroke-width="1.300" stroke-linejoin="round"/></svg></div>
    <div class="cb dk"><svg width="22" height="20"><g fill="none" stroke="#fff" stroke-width="1.300"><circle cx="7" cy="4.500" r="4"/><circle cx="17" cy="6" r="2.700"/><path d="M2.500 11.500h9q2 0 2 2 0 6-6.500 6t-6.500-6q0-2 2-2zM15.500 11.500H20q1.500 0 1.500 2 0 4.500-5.500 4.500"/></g></svg></div>
    <div class="cb" style="background:#ae0039"><svg width="21" height="10"><path d="M0 6Q2 .500 10.500.5T21 6q0 4-2 3.500l-3.500-.8Q14.500 8 14.500 5q-4-1.500-8 0 0 3-1 3.700L2 9.500Q0 10 0 6z" fill="#fff"/></svg></div>
  </div>
</main>

<section class="strip">
  <div class="tile bg-black"><span><span data-w="84">Vaibhav (Guest)</span></span><div data-h="4"></div></div>
  <div class="tile me"><div class="ava position-absolute">N</div><span><span data-w="73">NVC-SERVICE</span></span><div data-h="4"></div></div>
</section>

<footer class="dock">
  <div class="app"><svg width="36" height="45" viewBox="0 0 36 45"><path d="M4 0h18l14 14v27q0 4-4 4H4q-4 0-4-4V4q0-4 4-4z" fill="#2fa121"/><path d="M5 3h15l13 15v22q0 2-2 2H5q-2 0-2-2V5q0-2 2-2z" fill="#f5f5f5"/><path d="M27 0h6q3 0 3 3v7z" fill="#2a8a1c"/><path d="M7 17h22v20H7z" fill="#b9eaa6" stroke="#23801a" stroke-width="1.500"/><path d="M7 21h22M7 25h22M7 29h22M7 33h22M14 17v20M21 17v20" stroke="#23801a" stroke-width="1.500"/><path d="M20.500 27.500h10v10h-10z" fill="#fff" stroke="#777"/><path d="M22 32h2v5h-2z" fill="#1e88d8"/><path d="M24.500 29h2.500v8h-2.500z" fill="#e0622a"/><path d="M27.500 34h2v3h-2z" fill="#f3bc20"/></svg><div class="dots" data-top="3"><i></i><i></i><i></i><i></i></div></div>
  <div class="app"><svg width="36" height="45" viewBox="0 0 36 45"><rect width="36" height="45" rx="4" fill="#f0f0f0"/><path d="M5 9h26M5 13h26M5 17h26M5 21h26M5 25h26M5 29h26M5 33h26" stroke="#ccc"/><path d="M26 10l6 5-18 19-6-5z" fill="#2f61d5"/><path d="M28 8l4 4 0 3-6-5z" fill="#1846b5"/><path d="M8 29l6 5-9 4z" fill="#f3cba7"/><path d="M5 35.500v2.500l2.500-1z" fill="#333"/></svg><div class="dots" data-top="3"></div></div>
  <div class="app"><svg width="44" height="36"><rect x=".5" y=".5" width="43" height="35" rx="4" fill="#4a4b4a" stroke="#777"/><path d="M6 5l6 3-6 3M13 14.500h7" fill="none" stroke="#fff" stroke-width="1.800"/></svg><div class="dots" data-top="8"><i></i></div></div>
  <div class="app cur"><svg width="48" height="48" viewBox="0 0 48 48"><circle cx="24" cy="24" r="24" fill="#2f9e4b"/><path d="M3.200 12A24 24 0 0 1 44.800 12H24L14 30z" fill="#dd352c"/><path d="M44.800 12A24 24 0 0 1 24 48l10-18-2-18z" fill="#f8bb15"/><circle cx="24" cy="24" r="12" fill="#fff"/><circle cx="24" cy="24" r="9.500" fill="#1d73e8"/></svg><div class="dots"><i></i><i></i></div></div>
  <div class="app"><svg width="42" height="42"><rect width="42" height="42" fill="#20d789"/><path d="M26 0h16v42z" fill="#10c6ec"/><path d="M0 42L30 0l12 30v12z" fill="#e9f04d"/><path d="M0 20L14 0h14L0 38z" fill="#20d789"/><rect x="6" y="6" width="30" height="30" fill="#0a0a0a"/><text x="8" y="23" font-family="Open Sans" font-weight="700" font-size="19" textLength="25" lengthAdjust="spacingAndGlyphs" fill="#fff">PC</text><path d="M9 31h11" stroke="#fff" stroke-width="2"/></svg><div class="dots" data-top="5"><i></i></div></div>
  <div class="app"><svg width="46" height="46"><circle cx="23" cy="23" r="23" fill="#ff6c37"/><circle cx="33" cy="13" r="3.500" fill="#fff"/><path d="M31 16q-6-1-10 10L9.500 37l3 0L24 29q9-5 8-13z" fill="#fff"/><path d="M21 26l8-7M24 29l6-9" stroke="#ff6c37"/></svg><div class="dots" data-top="3"><i></i></div></div>
  <div class="app"><svg width="44" height="45"><rect x=".5" y=".5" width="43" height="44" rx="4" fill="#a1978a" stroke="#b9b0a4"/><path d="M6 12q0-3 2-3h9q2 0 4 3h14q3 0 3 3v18q0 3-3 3H9q-3 0-3-3z" fill="#fafafa"/><path d="M6 12q0-3 2-3h9q2 0 4 3l-4 3H6z" fill="#dfdcd6"/></svg><div class="dots" data-top="3"><i></i></div></div>
  <div class="app"><svg width="42" height="42" viewBox="0 0 42 42"><circle cx="12" cy="12" r="12" fill="#0a83d0"/><circle cx="30" cy="30" r="12" fill="#0a83d0"/><circle cx="21" cy="21" r="20.500" fill="#0a9fea"/><text x="12.500" y="31" font-family="Open Sans" font-weight="700" font-size="29" textLength="17" lengthAdjust="spacingAndGlyphs" fill="#fff">S</text></svg><div class="dots" data-top="5"><i></i></div></div>
  <div class="nine"><i></i><i></i><i></i><i></i><i></i><i></i><i></i><i></i><i></i></div>
</footer>

<script>
// slide thumbnails
const green='<rect y="22.300" width="44" height="2.700" fill="#128a4e"/><rect x="33" y="21" width="9" height="3" rx="1.500" fill="#dfe6df"/>';
const art={
27:'<path d="M6 2h16M6 7h6M6 16h5" stroke="#bfe6dc"/><path d="M6 12.500h10M6 20.500h10" stroke="#0d9277" stroke-width="2"/>',
28:'<path d="M1 6h6" stroke="#0d9277" stroke-width="2"/><path d="M10 3h14M10 9h12M4 13h12M20 12h14" stroke="#c9eee4"/>',
29:'<path d="M1 6h6" stroke="#0d9277" stroke-width="2"/><path d="M8 2h25v11H8z" fill="#7fa85c"/><path d="M12 5h21v4H12z" fill="#e8503a"/><path d="M34 1h9v11h-9z" fill="#999"/><path d="M9 20h25v-8h9v10M23 14h10M23 17h10" fill="none" stroke="#e33"/>',
30:'<path d="M4 5h14" stroke="#888" stroke-width=".6"/><path d="M2 10h40v11H2z" fill="#e5e9f4"/><path d="M2 12h6M2 15h5M2 18h6M12 12v7M19 12v7" stroke="#9aa"/>',
36:'<path d="M1 2h5" stroke="#222" stroke-width="1.500"/><path d="M7 5h11v5H7zM7 11h6v3H7z" fill="#bbb"/><path d="M21 12V9M23 12V7M27 13V8M29 13v-3" stroke="#777"/>',
37:'<path d="M1 2h5" stroke="#222" stroke-width="1.500"/><path d="M22 3v17M25 3v17M28 3v17M32 3v17M36 3v17M40 3v17" stroke="#aaa" stroke-width="2" stroke-dasharray="1 1"/><path d="M12 5h8M11 11h9" stroke="#ccc"/>',
38:'<path d="M1 6h24v10H1z" fill="#d6f4ee"/><path d="M3 15v-4M6 15V9M10 15v-5" stroke="#2a5fa5" stroke-width="2"/><path d="M16 13h8" stroke="#0d9277"/>',
39:'<path d="M6 3h29M6 11h29M6 18h29" stroke="#69b45a" stroke-width="1.500"/><path d="M6 5h29v4H6zM6 13h29v4H6z" fill="#d8eee2"/>'};
const plain='<path d="M1 7.500h5" stroke="#333" stroke-width="1.200"/><path d="M2 20h4" stroke="#345" stroke-width="2"/><path d="M1 2h3M8 4h5M8 9h24M8 13h22M1 12h4" stroke="#e6e6e6" stroke-width=".7" stroke-dasharray="3 2"/>';
let t='';
for(let n=27;n<40;n++)t+=`<div class="th"><div class="no"${n==30?' style="color:#e0533a"':''}>${n}${n==29?'<svg width="9" height="9" viewBox="0 0 10 10" style="margin:2px 0 0 5px"><path d="M5 0l1.300 3.500H10L7 6l1.200 4L5 7.500 1.800 10 3 6 0 3.500h3.700z" fill="#666"/></svg>':''}</div><div class="pic${n==30?' sel':''}"><svg width="44" height="25">${art[n]||plain}${green}</svg></div></div>`;
document.getElementById('thumbs').innerHTML=t;

// failure report grid
const rows=[['Dosing Assembly',92,113,0],['Load Cell',49,44,2],['Flash Card',56,24,0],['TB  HMI',43,18,0],['Solenoid Valve',79,17,0],['Weigh Bin Assembly',110,17,4],['Mixing Chamber Assembly',145,11,1],['TB Valve Manifold',98,8,1],['Slide Gate Assembly',110,8,0],['Module',42,8,0],['Electrical Component',117,3,1],['Chassis Assembly',95,1,0],['PLC',20,1,0],['Grand Total',63,273,9]];
let g='<div class="cel hd hl"><span data-w="46">TB parts</span></div><div class="cel hd hl"><span><span data-w="90">No. of Customer</span><br><span data-w="63">Complaints</span></span></div><div class="cel hd hl"><span><span data-gap="1" data-w="135">No of Complaints during</span><br><span data-gap="1" data-w="85">Internal testing</span></span></div>';
for(const [h,w] of [['Replace',44],['Replace',44],['Adjust',36],['Replace',44]])g+=`<div class="cel hd"><span data-w="${w}">${h}</span></div>`;
for(const r of rows)g+=`<div class="cel nm"><span data-w="${r[1]}">${r[0]}</span></div><div class="cel pk">${r[2]==113?'<span class="sel113">113</span>':r[2]}</div><div class="cel">${r[3]}</div>`+'<div class="cel"></div>'.repeat(4);
for(const [x,y] of [[0,0],[50,0],[100,0],[0,50],[100,50],[0,100],[50,100],[100,100]])g+=`<i class="hdl" style="left:${x}%;top:${y}%"></i>`;
g+='<svg class="position-absolute" style="left:232px;top:37px" width="6" height="12"><path d="M0 .5h2l1 1 1-1h2M0 11.500h2l1-1 1 1h2M3 1.500v9" fill="none" stroke="#222"/></svg>';
document.getElementById('parts').innerHTML=g;

// spacing and label widths
document.querySelectorAll('[data-gap]').forEach(e=>e.style.marginLeft=e.dataset.gap+'px');
document.querySelectorAll('[data-top]').forEach(e=>e.style.marginTop=e.dataset.top+'px');
document.querySelectorAll('[data-right]').forEach(e=>e.style.marginRight=e.dataset.right+'px');
document.querySelectorAll('[data-h]').forEach(e=>{e.style.height=e.dataset.h+'px';e.style.flex='none'});
document.querySelectorAll('[data-box]').forEach(e=>{e.style.width=e.dataset.box+'px';e.style.flex='none'});
document.querySelectorAll('[data-w]').forEach(e=>{
  const w=+e.dataset.w,n=e.textContent.length,m=e.getBoundingClientRect().width;
  if(n>1)e.style.letterSpacing=((w-m)/n).toFixed(3)+'px';
  e.style.width=w+'px';
});
</script>
</body>
</html>
